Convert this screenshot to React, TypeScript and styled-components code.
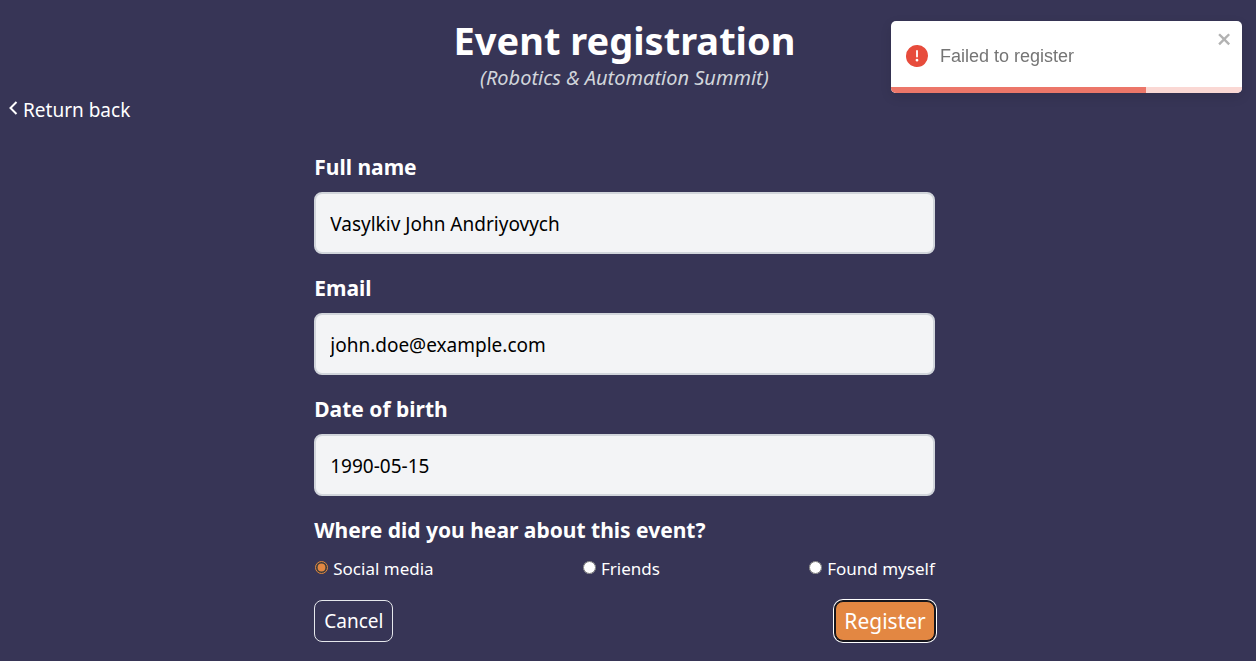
import React, { useState } from "react";
import styled, { createGlobalStyle } from "styled-components";

const GlobalStyle = createGlobalStyle`
  *, *::before, *::after { box-sizing: border-box; }
  body {
    margin: 0;
    background: #373556;
    color: #fff;
    font-family: "Segoe UI", "Noto Sans", sans-serif;
  }
  button, input { font: inherit; }
`;

const Page = styled.main`
  display: flex;
  flex-direction: column;
  padding: 15px 11px 18px 4px;
`;

const Header = styled.header`
  display: flex;
  flex-direction: column;
  align-items: center;
`;

const Title = styled.h1`
  margin: 0;
  font-size: 38px;
  line-height: 50px;
  font-weight: 700;
`;

const Subtitle = styled.p`
  margin: 0;
  color: #d1d5db;
  font-size: 20px;
  line-height: 26px;
  font-style: italic;
`;

const BackLink = styled.a`
  display: flex;
  align-items: center;
  align-self: flex-start;
  gap: 4px;
  margin: 5px 0 0 4px;
  color: #fff;
  font-size: 19px;
  line-height: 28px;
  text-decoration: none;

  svg { margin-bottom: 4px; }
`;

const Form = styled.form`
  display: flex;
  flex-direction: column;
  gap: 18px;
  width: 50%;
  min-width: 300px;
  margin: 27px auto 0;
`;

const Field = styled.div`
  display: flex;
  flex-direction: column;
  gap: 9px;
`;

const Label = styled.label`
  font-size: 21px;
  line-height: 32px;
  font-weight: 700;
`;

const TextInput = styled.input`
  width: 100%;
  height: 62px;
  padding: 2px 14px 0;
  border: 2px solid #d1d5db;
  border-radius: 8px;
  outline: none;
  background: #f3f4f6;
  color: #000;
  font-size: 19px;
`;

const Sources = styled.fieldset`
  margin: 0;
  padding: 0;
  border: 0;
`;

const Legend = styled.legend`
  padding: 0;
  font-size: 21px;
  line-height: 32px;
  font-weight: 700;
`;

const Options = styled.div`
  display: flex;
  justify-content: space-between;
  padding-top: 10px;
`;

const Option = styled.label`
  display: flex;
  align-items: center;
  gap: 5px;
  font-size: 17px;
  line-height: 26px;
`;

const Radio = styled.input`
  width: 13px;
  height: 13px;
  margin: 0 0 3px 1px;
  accent-color: #e38742;
`;

const Actions = styled.div`
  display: flex;
  align-items: center;
  justify-content: space-between;
`;

const Button = styled.button`
  height: 42px;
  padding: 0 9px;
  border: 1px solid #e5e7eb;
  border-radius: 8px;
  background: transparent;
  color: #fff;
  font-size: 19px;
  line-height: 28px;
`;

const PrimaryButton = styled(Button)`
  height: 40px;
  padding: 0 8px;
  border-color: #15151c;
  background: #e38742;
  box-shadow: 0 0 0 1px #15151c, 0 0 0 2px #fff;
  font-size: 21px;
`;

const Toast = styled.div`
  position: fixed;
  top: 21px;
  right: 14px;
  width: 351px;
  overflow: hidden;
  border-radius: 5px;
  background: #fff;
  box-shadow: 0 4px 12px rgba(0, 0, 0, 0.1);
  color: #757575;
  font-family: "Liberation Sans", Arial, sans-serif;
  font-size: 18px;
`;

const ToastBody = styled.div`
  display: flex;
  align-items: center;
  gap: 12px;
  height: 66px;
  padding: 4px 9px 0 15px;
`;

const ToastText = styled.span`
  flex: 1;
`;

const CloseButton = styled.button`
  display: flex;
  align-self: flex-start;
  margin-top: 5px;
  padding: 0;
  border: 0;
  background: transparent;
  color: #b2b2b2;
`;

const Progress = styled.div`
  height: 6px;
  background: #fad8d4;
`;

const ProgressFill = styled.div`
  height: 100%;
  background: #ec7669;
`;

const fields = [
  { id: "fullName", label: "Full name", value: "Vasylkiv John Andriyovych" },
  { id: "email", label: "Email", value: "john.doe@example.com" },
  { id: "birthDate", label: "Date of birth", value: "1990-05-15" },
];

const sources = ["Social media", "Friends", "Found myself"];

export default function App() {
  const [source, setSource] = useState(sources[0]);
  const [toastOpen, setToastOpen] = useState(true);
  const progress = 72.7;

  return (
    <>
      <GlobalStyle />
      <Page>
        <Header>
          <Title>Event registration</Title>
          <Subtitle>(Robotics &amp; Automation Summit)</Subtitle>
        </Header>
        <BackLink href="#">
          <svg width="11" height="16" viewBox="0 0 11 16" fill="none" stroke="currentColor" strokeWidth="2" aria-hidden="true">
            <path d="M8.5 2 L2.5 8 L8.5 14" />
          </svg>
          Return back
        </BackLink>
        <Form onSubmit={(e) => e.preventDefault()}>
          {fields.map((f) => (
            <Field key={f.id}>
              <Label htmlFor={f.id}>{f.label}</Label>
              <TextInput id={f.id} type="text" defaultValue={f.value} />
            </Field>
          ))}
          <Sources>
            <Legend>Where did you hear about this event?</Legend>
            <Options>
              {sources.map((s) => (
                <Option key={s}>
                  <Radio type="radio" name="source" checked={source === s} onChange={() => setSource(s)} />
                  {s}
                </Option>
              ))}
            </Options>
          </Sources>
          <Actions>
            <Button type="button">Cancel</Button>
            <PrimaryButton type="submit">Register</PrimaryButton>
          </Actions>
        </Form>
      </Page>
      {toastOpen && (
        <Toast role="alert">
          <ToastBody>
            <svg width="22" height="22" viewBox="0 0 24 24" fill="#e74c3c" aria-hidden="true">
              <path d="M11.983 0a12.206 12.206 0 00-8.51 3.653A11.8 11.8 0 000 12.207 11.779 11.779 0 0011.8 24h.214A12.111 12.111 0 0024 11.791 11.766 11.766 0 0011.983 0zM10.5 16.542a1.476 1.476 0 011.449-1.53h.027a1.527 1.527 0 011.523 1.47 1.475 1.475 0 01-1.449 1.53h-.027a1.529 1.529 0 01-1.523-1.47zM11 12.5v-6a1 1 0 012 0v6a1 1 0 11-2 0z" />
            </svg>
            <ToastText>Failed to register</ToastText>
            <CloseButton type="button" aria-label="Close" onClick={() => setToastOpen(false)}>
              <svg width="16" height="18" viewBox="0 0 14 16" fill="currentColor" aria-hidden="true">
                <path fillRule="evenodd" d="M7.71 8.23l3.75 3.75-1.48 1.48-3.75-3.75-3.75 3.75L1 11.98l3.75-3.75L1 4.48 2.48 3l3.75 3.75L9.98 3l1.48 1.48-3.75 3.75z" />
              </svg>
            </CloseButton>
          </ToastBody>
          <Progress>
            <ProgressFill style={{ width: `${progress}%` }} />
          </Progress>
        </Toast>
      )}
    </>
  );
}
